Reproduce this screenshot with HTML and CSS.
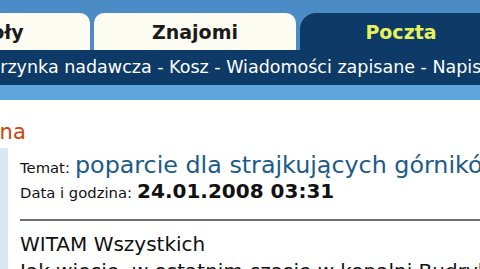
FILE: index.html
```html
<!DOCTYPE html>
<html lang="pl">
<head>
<meta charset="UTF-8">
<title>Poczta</title>
<link rel="stylesheet" href="styles.css">
</head>
<body>
<div class="strona">
<div class="zakladki">
<div class="zakladka">Szkoły</div>
<div class="zakladka">Znajomi</div>
<div class="zakladka aktywna">Poczta</div>
</div>
<div class="podmenu">Skrzynka nadawcza - Kosz - Wiadomości zapisane - Napisz</div>
<div class="pasek"></div>
<div class="tresc">
<h2 class="naglowek">Wiadomość odebrana</h2>
<div class="wiadomosc">
<div class="wiersz"><span class="etykieta">Temat:</span> <span class="temat">poparcie dla strajkujących górników</span></div>
<div class="wiersz"><span class="etykieta">Data i godzina:</span> <span class="data">24.01.2008 03:31</span></div>
<hr class="linia">
<p class="tekst">WITAM Wszystkich<br>Jak wiecie, w ostatnim czasie w kopalni Budryk</p>
</div>
</div>
</div>
</body>
</html>
```

FILE: styles.css
```css
body {
    margin: 0;
    background: #fff;
    font-family: "DejaVu Sans", Verdana, sans-serif;
    overflow: hidden;
}

.strona {
    width: 480px;
    height: 269px;
    overflow: hidden;
}

.zakladki {
    display: flex;
    gap: 4px;
    padding-top: 13px;
    margin-left: -112px;
    background: #4b8cc6;
    height: 37px;
}

.zakladka {
    flex: 0 0 202px;
    height: 37px;
    box-sizing: border-box;
    background: #fdfcf2;
    border-radius: 10px 10px 0 0;
    text-align: center;
    font-weight: bold;
    font-size: 19px;
    line-height: 38px;
    color: #1a1a1a;
}

.zakladka.aktywna {
    background: #0d3a66;
    color: #e6f25c;
    border-radius: 16px 16px 0 0;
}

.podmenu {
    background: #0d3a66;
    color: #fff;
    font-size: 17.5px;
    height: 35px;
    line-height: 34px;
    white-space: nowrap;
    margin-left: -21px;
    padding-right: 60px;
}

.pasek {
    height: 15px;
    background: #5fa6de;
}

.tresc {
    padding-top: 17px;
}

.naglowek {
    margin: 0 0 0 -202px;
    font-size: 21px;
    font-weight: normal;
    color: #cc4410;
    white-space: nowrap;
    height: 31px;
    line-height: 30px;
}

.wiadomosc {
    border-left: 8px solid #d9e7f4;
    padding-left: 12px;
    padding-top: 4px;
    white-space: nowrap;
}

.wiersz {
    height: 26px;
    line-height: 26px;
}

.etykieta {
    font-size: 14.8px;
    color: #111;
}

.temat {
    font-size: 23.8px;
    color: #1b5b8a;
}

.data {
    font-size: 20px;
    font-weight: bold;
    color: #111;
}

.linia {
    margin: 15px 0 0;
    border: 0;
    height: 2px;
    background: #6b6e70;
}

.tekst {
    margin: 10px 0 0;
    font-size: 20px;
    line-height: 27px;
    color: #111;
}
```
